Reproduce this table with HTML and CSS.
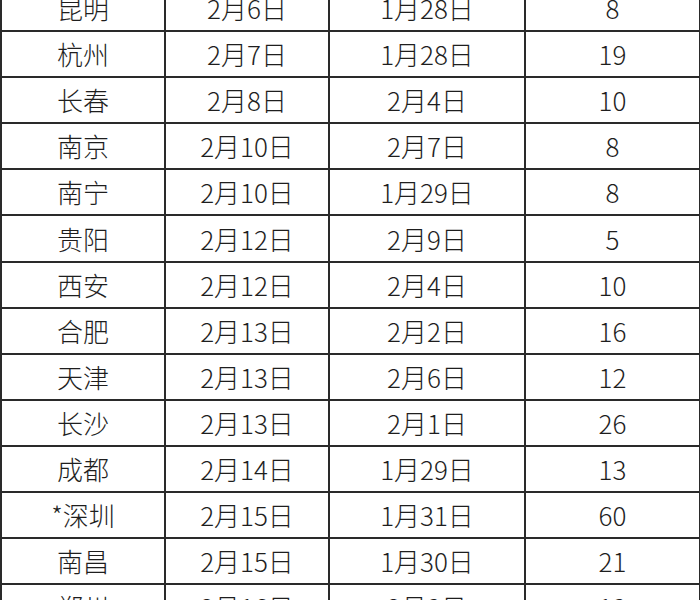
FILE: index.html
```html
<!DOCTYPE html>
<html lang="zh">
<head>
<meta charset="utf-8">
<link rel="stylesheet" href="styles.css">
</head>
<body>
<table class="tbl">
<colgroup><col class="c1"><col class="c2"><col class="c3"><col class="c4"></colgroup>
<tbody>
<tr><td>昆明</td><td>2月6日</td><td>1月28日</td><td>8</td></tr>
<tr><td>杭州</td><td>2月7日</td><td>1月28日</td><td>19</td></tr>
<tr><td>长春</td><td>2月8日</td><td>2月4日</td><td>10</td></tr>
<tr><td>南京</td><td>2月10日</td><td>2月7日</td><td>8</td></tr>
<tr><td>南宁</td><td>2月10日</td><td>1月29日</td><td>8</td></tr>
<tr><td>贵阳</td><td>2月12日</td><td>2月9日</td><td>5</td></tr>
<tr><td>西安</td><td>2月12日</td><td>2月4日</td><td>10</td></tr>
<tr><td>合肥</td><td>2月13日</td><td>2月2日</td><td>16</td></tr>
<tr><td>天津</td><td>2月13日</td><td>2月6日</td><td>12</td></tr>
<tr><td>长沙</td><td>2月13日</td><td>2月1日</td><td>26</td></tr>
<tr><td>成都</td><td>2月14日</td><td>1月29日</td><td>13</td></tr>
<tr><td>*深圳</td><td>2月15日</td><td>1月31日</td><td>60</td></tr>
<tr><td>南昌</td><td>2月15日</td><td>1月30日</td><td>21</td></tr>
<tr><td>郑州</td><td>2月16日</td><td>2月3日</td><td>13</td></tr>
</tbody>
</table>
</body>
</html>
```
FILE: styles.css
```css
html, body {
  margin: 0;
  padding: 0;
  background: #fff;
  overflow: hidden;
}
.tbl {
  border-collapse: collapse;
  table-layout: fixed;
  width: 699px;
  margin-top: -16px;
  font-family: "Noto Sans CJK SC", "Noto Sans", sans-serif;
  font-size: 26px;
  font-weight: 300;
  color: #1e1e1e;
}
.c1 { width: 164px; }
.c2 { width: 164px; }
.c3 { width: 196px; }
.c4 { width: 175px; }
.tbl td {
  border: 2px solid #2a2a2a;
  height: 44.1px;
  padding: 0;
  text-align: center;
  vertical-align: middle;
  line-height: 44px;
  white-space: nowrap;
}
```
